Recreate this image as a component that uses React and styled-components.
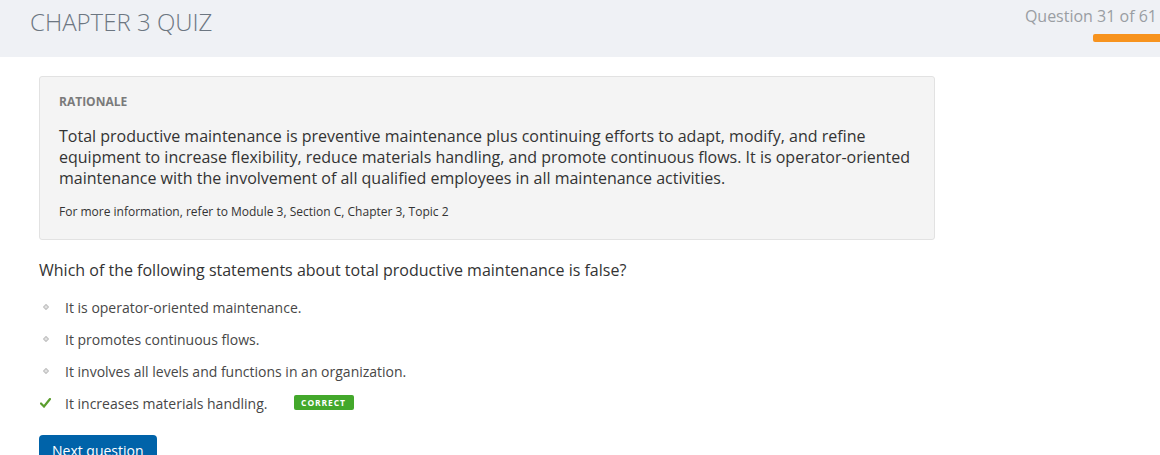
import React from "react";
import styled, { createGlobalStyle } from "styled-components";

const GlobalStyle = createGlobalStyle`
  body {
    margin: 0;
    background: #fff;
    font-family: "Open Sans", "Liberation Sans", sans-serif;
    color: #333;
  }
`;

const options = [
  { text: "It is operator-oriented maintenance." },
  { text: "It promotes continuous flows." },
  { text: "It involves all levels and functions in an organization." },
  { text: "It increases materials handling.", correct: true },
];

const Header = styled.header`
  display: flex;
  justify-content: space-between;
  height: 57px;
  background: #eff1f5;
  padding-left: 30px;
`;

const Title = styled.h1`
  margin: 0;
  padding-top: 4px;
  font-size: 24px;
  line-height: 36px;
  font-weight: 300;
  color: #6c7681;
`;

const Progress = styled.div`
  display: flex;
  flex-direction: column;
  align-items: flex-end;
  padding-top: 5px;
`;

const Count = styled.div`
  font-size: 16px;
  line-height: 22px;
  color: #9a9ea3;
  padding-right: 3px;
`;

const Bar = styled.div`
  margin-top: 7px;
  width: 67px;
  height: 8px;
  background: #f7931e;
  border-radius: 2px 0 0 2px;
`;

const Main = styled.main`
  padding: 19px 39px 0;
`;

const Rationale = styled.section`
  width: 856px;
  background: #f4f4f4;
  border: 1px solid #e2e2e2;
  border-radius: 3px;
  padding: 17px 19px 19px;
`;

const Label = styled.div`
  font-size: 12px;
  line-height: 16px;
  font-weight: 700;
  color: #7a7a7a;
`;

const Body = styled.p`
  margin: 16px 0 0;
  font-size: 16px;
  line-height: 21px;
  color: #333;
`;

const Note = styled.p`
  margin: 15px 0 0;
  font-size: 12px;
  line-height: 16px;
  color: #333;
`;

const Question = styled.p`
  margin: 19px 0 0;
  font-size: 16px;
  line-height: 22px;
  color: #333;
`;

const List = styled.ul`
  list-style: none;
  margin: 10px 0 0;
  padding: 0;
`;

const Item = styled.li`
  display: flex;
  align-items: center;
  height: 32px;
  font-size: 14px;
  color: #474747;
`;

const Marker = styled.span`
  width: 26px;
  display: flex;
  align-items: center;
  padding-left: ${(p) => (p.$check ? "1px" : "4px")};
  box-sizing: border-box;
`;

const Badge = styled.span`
  margin-left: 26px;
  width: 60px;
  height: 15px;
  display: inline-flex;
  align-items: center;
  justify-content: center;
  background: #43a82b;
  border-radius: 2px;
  color: #fff;
  font-size: 8.5px;
  font-weight: 700;
  letter-spacing: 0.9px;
  margin-top: -2px;
`;

const Button = styled.button`
  margin-top: 16px;
  height: 40px;
  padding: 6px 13px 0;
  border: none;
  border-radius: 4px;
  background: #0063a9;
  color: #fff;
  font-family: inherit;
  font-size: 14px;
  line-height: 20px;
  display: flex;
`;

const Diamond = () => (
  <svg width="6" height="6" viewBox="0 0 6 6">
    <path d="M3 0.5 L5.5 3 L3 5.5 L0.5 3 Z" fill="#e4e4e4" stroke="#c2c2c2" strokeWidth="1.1" />
  </svg>
);

const Check = () => (
  <svg width="11" height="10" viewBox="0 0 11 10">
    <path d="M1 5.5 L4 8.5 L10 1" fill="none" stroke="#5b9e2e" strokeWidth="2.2" strokeLinecap="round" />
  </svg>
);

export default function App() {
  return (
    <>
      <GlobalStyle />
      <Header>
        <Title>CHAPTER 3 QUIZ</Title>
        <Progress>
          <Count>Question 31 of 61</Count>
          <Bar />
        </Progress>
      </Header>
      <Main>
        <Rationale>
          <Label>RATIONALE</Label>
          <Body>
            Total productive maintenance is preventive maintenance plus continuing efforts to adapt, modify, and refine
            equipment to increase flexibility, reduce materials handling, and promote continuous flows. It is operator-oriented
            maintenance with the involvement of all qualified employees in all maintenance activities.
          </Body>
          <Note>For more information, refer to Module 3, Section C, Chapter 3, Topic 2</Note>
        </Rationale>
        <Question>Which of the following statements about total productive maintenance is false?</Question>
        <List>
          {options.map((o) => (
            <Item key={o.text}>
              <Marker $check={o.correct}>{o.correct ? <Check /> : <Diamond />}</Marker>
              {o.text}
              {o.correct && <Badge>CORRECT</Badge>}
            </Item>
          ))}
        </List>
        <Button>Next question</Button>
      </Main>
    </>
  );
}
